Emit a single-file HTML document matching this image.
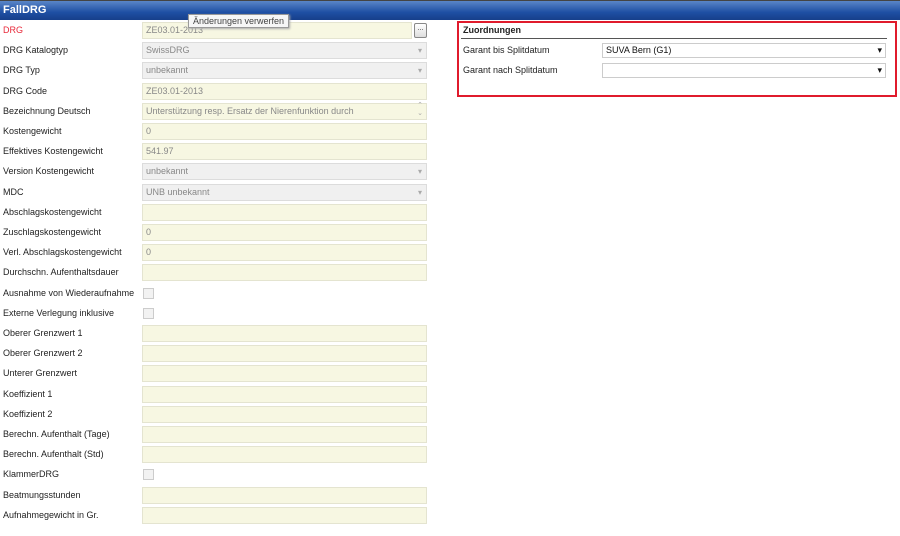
<!DOCTYPE html><html><head><meta charset="utf-8"><style>
body{margin:0;width:900px;height:536px;background:#fff;font-family:"Liberation Sans",sans-serif;font-size:9px;color:#222;position:relative;overflow:hidden}
.hd{position:absolute;left:0;top:0;width:900px;height:19px;background:linear-gradient(#5a86c8,#1e4fa3 60%,#173f8a);border-top:1px solid #444}
.hd span{position:absolute;left:3px;top:3px;color:#fff;font-weight:bold;font-size:11px}
.l{position:absolute;left:3px}
.f{position:absolute;left:142px;width:285px;height:17px;border:1px solid #e4e4d0;background:#f7f7e2;color:#888;padding-left:3px;box-sizing:border-box;line-height:15px}
.s{background:#f0f0f0;border-color:#dcdcdc}
.s:after{content:"▾";position:absolute;right:4px;top:0;color:#aaa;font-size:8px}
.cb{position:absolute;left:143px;width:9px;height:9px;border:1px solid #ccc;background:#f2f2f2}
.tip{position:absolute;left:188px;top:14px;padding:1px 4px;background:#f6f6f6;border:1px solid #999;box-shadow:1px 1px 2px #aaa;color:#444;font-size:9px}
.box{position:absolute;left:457px;top:21px;width:436px;height:72px;border:2px solid #e01b2c}
.sel{position:absolute;left:602px;width:284px;height:15px;box-sizing:border-box;border:1px solid #ccc;background:#fff;padding-left:3px;line-height:13px;color:#111}
.sel:after{content:"▾";position:absolute;right:3px;top:0;font-size:9px;color:#111}
</style></head><body>
<div class="hd"><span>FallDRG</span></div>
<div class="box"></div>
<div style="position:absolute;left:463px;top:25px;font-weight:bold;color:#222">Zuordnungen</div>
<div style="position:absolute;left:461px;top:38px;width:426px;border-top:1px solid #555"></div>
<div style="position:absolute;left:463px;top:45px">Garant bis Splitdatum</div>
<div class="sel" style="top:43px">SUVA Bern (G1)</div>
<div style="position:absolute;left:463px;top:65px">Garant nach Splitdatum</div>
<div class="sel" style="top:63px"></div>
<div id="rows"></div>
<script>
var R=[["DRG","d","ZE03.01-2013"],["DRG Katalogtyp","s","SwissDRG"],["DRG Typ","s","unbekannt"],["DRG Code","t","ZE03.01-2013"],["Bezeichnung Deutsch","a","Unterstützung resp. Ersatz der Nierenfunktion durch"],["Kostengewicht","t","0"],["Effektives Kostengewicht","t","541.97"],["Version Kostengewicht","s","unbekannt"],["MDC","s","UNB unbekannt"],["Abschlagskostengewicht","t",""],["Zuschlagskostengewicht","t","0"],["Verl. Abschlagskostengewicht","t","0"],["Durchschn. Aufenthaltsdauer","t",""],["Ausnahme von Wiederaufnahme","c"],["Externe Verlegung inklusive","c"],["Oberer Grenzwert 1","t",""],["Oberer Grenzwert 2","t",""],["Unterer Grenzwert","t",""],["Koeffizient 1","t",""],["Koeffizient 2","t",""],["Berechn. Aufenthalt (Tage)","t",""],["Berechn. Aufenthalt (Std)","t",""],["KlammerDRG","c"],["Beatmungsstunden","t",""],["Aufnahmegewicht in Gr.","t",""]];
var h="";R.forEach(function(r,i){var c=30+i*20.2;
h+='<div class="l" style="top:'+(c-5)+'px;'+(i==0?'color:#e8293a':'')+'">'+r[0]+'</div>';
if(r[1]=="c")h+='<div class="cb" style="top:'+(c-5)+'px"></div>';
else{var st='top:'+(c-8)+'px;';if(r[1]=="d")st+='width:270px;';
h+='<div class="f'+(r[1]=="s"?' s':'')+'" style="'+st+'">'+r[2]+(r[1]=="a"?'<span style="position:absolute;right:3px;top:-2px;color:#aaa;font-size:7px;line-height:8px">⌃<br>⌄</span>':'')+'</div>';
if(r[1]=="d")h+='<div style="position:absolute;left:414px;top:'+(c-7)+'px;width:11px;height:13px;border:1px solid #888;border-radius:2px;background:linear-gradient(#fff,#ddd);font-size:7px;text-align:center;line-height:10px">...</div>';}
});document.getElementById("rows").innerHTML=h;
</script>
<div class="tip">Änderungen verwerfen</div>
</body></html>
